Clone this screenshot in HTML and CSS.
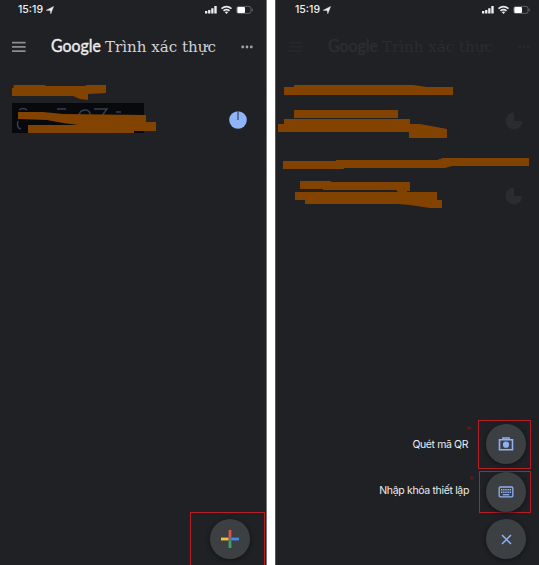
FILE: index.html
```html
<!DOCTYPE html>
<html lang="vi">
<head>
<meta charset="utf-8">
<title>Google Trình xác thực</title>
<link rel="stylesheet" href="styles.css">
</head>
<body>
<svg class="defs" width="0" height="0">
  <symbol id="arrow" viewBox="0 0 8 8"><path d="M.2 4.300 7.600.4 4.800 7.800 4.200 4.500z" fill="#eee" stroke="#eee" stroke-width=".4"/></symbol>
  <symbol id="status" viewBox="0 0 50 10">
    <path d="M0 6h2.300v2.400H0zM3.100 5h2.300v3.400H3.100zM6.200 3.200h2.300v5.200H6.200zM9.300 1.100h2.400v7.300H9.300z" fill="#eee"/>
    <g fill="none" stroke="#e8e8e8" stroke-width="1.700"><path d="M16.500 3.700q5-4.200 10 0M18.500 5.900q3-2.400 6 0"/></g>
    <path d="m21.500 9-1.800-2q1.800-1.200 3.600 0z" fill="#eee"/>
    <rect x="31.700" y="1.400" width="14.300" height="7" rx="2" fill="none" stroke="#66676a" stroke-width=".9"/>
    <rect x="32.300" y="1.900" width="7.700" height="6" rx="1" fill="#fff"/>
    <path d="M47.200 3.700v2.500" stroke="#66676a"/>
  </symbol>
  <symbol id="menu" viewBox="0 0 14 12"><path d="M0 1.700h13.600M0 5.900h13.600M0 10.100h13.600" stroke="currentColor" stroke-width="1.700"/></symbol>
  <symbol id="more" viewBox="0 0 12 4"><g fill="currentColor"><circle cx="1.700" cy="2" r="1.400"/><circle cx="6" cy="2" r="1.400"/><circle cx="10.300" cy="2" r="1.400"/></g></symbol>
</svg>
<main class="screens">
  <section class="phone phone-list">
    <div class="status"><span class="time">15:19</span><svg class="loc"><use href="#arrow"/></svg><svg class="signals"><use href="#status"/></svg></div>
    <header class="bar">
      <svg class="menu"><use href="#menu"/></svg>
      <svg class="title" viewBox="0 0 166 26"><text class="brand" x="0" y="18" textLength="50" lengthAdjust="spacingAndGlyphs">Google</text><text class="name" x="54" y="18" textLength="111" lengthAdjust="spacingAndGlyphs">Trình xác thực</text></svg>
      <svg class="more"><use href="#more"/></svg>
    </header>
    <div class="account">
      <div class="code">
        <svg viewBox="0 0 132 30"><g fill="none" stroke="#46526f" stroke-width="1.400" opacity=".75"><path d="M7 7q4-3 8 0M45 6h9M67 14q0-7 6-7t5 7M82 6h13l-6 8M104 9h5M6 18q-2 7 3 8M26 10v5"/></g></svg>
      </div>
      <svg class="timer" viewBox="0 0 18 18"><circle cx="9" cy="9" r="8.800" fill="#8fb4f8"/><path d="M9 9V0" stroke="#273043" stroke-width="1"/></svg>
    </div>
    <div class="actions"><div class="frame frame-add"><div class="fab">
      <svg width="18" height="18" viewBox="0 0 18 18"><path d="M7.600 0h2.800v7.600H7.600z" fill="#dc5548"/><path d="M0 7.600h7.600v2.800H0z" fill="#f4c13c"/><path d="M10.400 7.600H18v2.800h-7.600z" fill="#4b84e8"/><path d="M7.600 7.600h2.800L7.600 10.400z" fill="#dc5548"/><path d="M10.400 7.600v2.800H7.600z" fill="#4b84e8"/><path d="M7.600 10.400h2.800V18H7.600z" fill="#3fa45a"/></svg>
    </div></div></div>
    <svg class="marks" viewBox="0 0 267 565"><path d="M12 88h1.500V85H45l1 1h39l2-1h19v8l-18 1v6l-8-1-7-3H12zM18 112h25l20 2 83 1v7h10v9h-22v2H28v-8h50l-15-2-16-3-29-1z"/></svg>
  </section>
  <section class="phone phone-menu">
    <div class="status"><span class="time">15:19</span><svg class="loc"><use href="#arrow"/></svg><svg class="signals"><use href="#status"/></svg></div>
    <header class="bar dim">
      <svg class="menu"><use href="#menu"/></svg>
      <svg class="title" viewBox="0 0 166 26"><text class="brand" x="0" y="18" textLength="50" lengthAdjust="spacingAndGlyphs">Google</text><text class="name" x="54" y="18" textLength="111" lengthAdjust="spacingAndGlyphs">Trình xác thực</text></svg>
      <svg class="more"><use href="#more"/></svg>
    </header>
    <div class="timers">
      <svg viewBox="0 0 18 18"><path d="M9 9V.5A8.500 8.500 0 1 0 17.500 9z" fill="#2a2c30"/></svg>
      <svg viewBox="0 0 18 18"><path d="M9 9V.5A8.500 8.500 0 1 0 17.500 9z" fill="#2a2c30"/></svg>
    </div>
    <div class="actions">
      <div class="action"><span class="label label-qr">Quét mã QR</span><div class="frame frame-qr"><div class="fab">
        <svg width="16" height="14" viewBox="0 0 16 14"><path d="M1.500 2.700h13v10h-13z" fill="none" stroke="#8fb0f4" stroke-width="1.600"/><path d="M5 2.500V1h6v1.500" fill="none" stroke="#8fb0f4" stroke-width="1.600"/><circle cx="8" cy="7.700" r="3.100" fill="#8fb0f4"/></svg>
      </div></div></div>
      <div class="action"><span class="label">Nhập khóa thiết lập</span><div class="frame frame-key"><div class="fab">
        <svg width="16" height="12" viewBox="0 0 16 12"><rect x="1.200" y="1" width="13.600" height="9.800" rx="1" fill="none" stroke="#8fb0f4" stroke-width="1.300"/><path d="M3 3.800h10M3 6.200h10" stroke="#8fb0f4" stroke-width="1.500" stroke-dasharray="1.400 .75"/><path d="M4.800 8.700h6.400" stroke="#8fb0f4" stroke-width="1.300"/></svg>
      </div></div></div>
      <div class="action"><div class="fab">
        <svg width="11" height="11" viewBox="0 0 11 11"><path d="m1 1 9 9m0-9-9 9" stroke="#8fb0f4" stroke-width="1.500"/></svg>
      </div></div>
    </div>
    <svg class="marks" viewBox="275 0 264 565">
      <path d="M284 87h10v-2h119l14 2h26v8H284zM294 110h104v8H294zM284 119h126v5h10l27 5v9h-38v-6H278v-8h6zM283 161h53v-1h101l6-2h86v8h-77l-7 2H344v1h-61zM300 181h30l2 1h78v9h-3v1h30v8h5v8h-12l-20-3-12-1h-93v-4h-10v-8h103l-2-2h-73v-1h-23z"/>
      <path class="tick" d="m467.500 427 1.500 1.200-1.500 1.200m2-2.400 1.500 1.200-1.500 1.200M470.500 476.500l1.500 1.200-1.500 1.200m2-2.400 1.500 1.200-1.500 1.200"/>
    </svg>
  </section>
</main>
</body>
</html>
```
FILE: styles.css
```css
* { box-sizing: border-box; }
body { margin: 0; background: #fff; font-family: Inter, "Liberation Sans", sans-serif; }
svg { display: block; flex: none; }
.defs { position: absolute; }
.screens { display: flex; justify-content: space-between; width: 539px; height: 565px; overflow: hidden; }
.phone { position: relative; display: flex; flex-direction: column; height: 565px; background: #202125; overflow: hidden; }
.phone-list { width: 267px; border-right: 1px solid #77787b; }
.phone-menu { width: 264px; border-left: 1px solid #55565a; }
.status { display: flex; align-items: center; height: 19px; padding-left: 18px; flex: none; }
.phone-menu .status { padding-left: 19px; }
.time { width: 26px; font-size: 10.500px; line-height: 19px; font-weight: 500; color: #f2f2f2; white-space: nowrap; }
.loc { width: 8px; height: 8px; margin-left: 2px; }
.signals { width: 50px; height: 10px; margin-left: auto; margin-right: 11px; }
.phone-menu .signals { margin-right: 7px; }
.bar { display: flex; align-items: center; height: 26px; margin-top: 15px; padding-left: 12px; color: #8c8d90; flex: none; }
.phone-menu .bar { padding-left: 13px; }
.menu { width: 14px; height: 12px; }
.title { width: 166px; height: 26px; margin-left: 25px; overflow: visible; }
.more { width: 12px; height: 4px; margin-left: 24px; color: #a4a5a7; }
.brand { font: 400 16.500px Lato, sans-serif; fill: #eeeeef; stroke: #eeeeef; stroke-width: .35px; }
.name { font: 15px "DejaVu Serif", serif; fill: #d3d3d5; }
.dim { opacity: .055; }
.account { display: flex; align-items: center; height: 30px; margin: 43px 0 0 12px; }
.code { width: 132px; height: 30px; background: #08090d; }
.timer { width: 18px; height: 18px; margin: 3px 0 0 85px; }
.timers { display: flex; flex-direction: column; align-items: flex-end; gap: 57px; margin: 52px 16px 0 0; }
.timers svg { width: 18px; height: 18px; }
.actions { margin-top: auto; display: flex; flex-direction: column; align-items: flex-end; }
.phone-list .actions { padding-right: 1px; }
.phone-menu .actions { padding-bottom: 6px; }
.frame { display: flex; justify-content: center; border: 1px solid #b51f28; }
.frame-add { width: 75px; height: 53px; padding: 6px 0 0 5px; border-bottom: 0; }
.fab { display: flex; align-items: center; justify-content: center; width: 40px; height: 40px; border-radius: 50%; background: #3c4043; box-shadow: 0 1px 4px #111216; flex: none; }
.action { display: flex; align-items: center; }
.action:last-child { margin: 6px 13px 0 0; }
.label { margin-right: 10px; font-size: 10.500px; line-height: 16px; letter-spacing: -.34px; color: #ececed; white-space: nowrap; }
.label-qr { letter-spacing: -.4px; }
.frame-qr { width: 53px; height: 49px; margin-right: 8px; padding: 3px 0 0 2px; }
.frame-key { width: 52px; height: 42px; margin: 2px 8px 0 0; padding-left: 1px; }
.marks { position: absolute; inset: 0; width: 267px; height: 565px; fill: #834300; }
.phone-menu .marks { left: -1px; width: 264px; }
.marks .tick { fill: none; stroke: #8d1c25; stroke-width: .8px; }
```
